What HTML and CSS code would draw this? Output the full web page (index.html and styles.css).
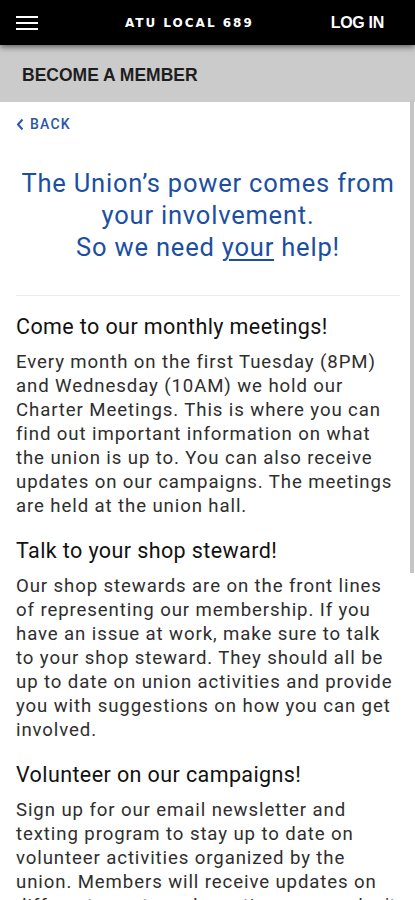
FILE: index.html
```html
<!DOCTYPE html>
<html>
<head>
<meta charset="utf-8">
<link rel="stylesheet" href="styles.css">
</head>
<body>
<header class="topbar">
  <div class="menu">
    <span></span><span></span><span></span>
  </div>
  <div class="brand">ATU LOCAL 689</div>
  <div class="login">LOG IN</div>
</header>
<div class="subbar">BECOME A MEMBER</div>
<main class="content">
  <a class="back">
    <svg width="8" height="13" viewBox="0 0 8 13"><path d="M6.5 1.5 L2 6.5 L6.5 11.5" fill="none" stroke="#2b56a6" stroke-width="2"/></svg>
    <span>BACK</span>
  </a>
  <h1 class="lead">The Union’s power comes from your involvement.<br>So we need <u>your</u> help!</h1>
  <hr class="divider">
  <h2 class="sec">Come to our monthly meetings!</h2>
  <p class="txt">Every month on the first Tuesday (8PM) and Wednesday (10AM) we hold our Charter Meetings. This is where you can find out important information on what the union is up to. You can also receive updates on our campaigns. The meetings are held at the union hall.</p>
  <h2 class="sec">Talk to your shop steward!</h2>
  <p class="txt">Our shop stewards are on the front lines of representing our membership. If you have an issue at work, make sure to talk to your shop steward. They should all be up to date on union activities and provide you with suggestions on how you can get involved.</p>
  <h2 class="sec">Volunteer on our campaigns!</h2>
  <p class="txt">Sign up for our email newsletter and texting program to stay up to date on volunteer activities organized by the union. Members will receive updates on different events and meetings so we don't miss a thing.</p>
</main>
<div class="scroll-thumb"></div>
</body>
</html>
```
FILE: styles.css
```css
html, body {
  margin: 0;
  padding: 0;
  height: 900px;
  overflow: hidden;
  background: #ffffff;
  font-family: Roboto, "Liberation Sans", sans-serif;
}
.topbar {
  position: relative;
  z-index: 2;
  height: 45px;
  background: #000;
  display: flex;
  align-items: center;
  padding: 0 16px;
  box-shadow: 0 2px 6px rgba(0,0,0,0.55);
  color: #fff;
}
.menu {
  width: 22px;
  display: flex;
  flex-direction: column;
  gap: 4px;
}
.menu span {
  display: block;
  height: 2px;
  background: #fff;
}
.brand {
  flex: 1;
  text-align: center;
  font-family: "DejaVu Sans", sans-serif;
  font-weight: bold;
  font-size: 12px;
  letter-spacing: 2px;
  padding-left: 10px;
}
.login {
  font-family: "Liberation Sans", sans-serif;
  font-weight: bold;
  font-size: 16px;
  letter-spacing: -0.3px;
  padding-right: 15px;
}
.subbar {
  height: 57px;
  background: #cbcbcb;
  display: flex;
  align-items: center;
  padding-left: 22px;
  padding-top: 3px;
  box-sizing: border-box;
  font-family: "Liberation Sans", sans-serif;
  font-weight: bold;
  font-size: 17.5px;
  color: #1e1e1e;
}
.content {
  padding: 0 15px 0 16px;
}
.back {
  display: flex;
  align-items: center;
  gap: 6px;
  margin-top: 14px;
  color: #2b56a6;
  font-size: 14px;
  font-weight: 500;
  letter-spacing: 1.2px;
  height: 16px;
}
.lead {
  margin: 35px 0 0;
  text-align: center;
  color: #1b4f9f;
  font-weight: 400;
  font-size: 25.5px;
  letter-spacing: 0.8px;
  line-height: 32px;
}
.lead u {
  text-underline-offset: 3px;
  text-decoration-thickness: 1.5px;
}
.divider {
  margin: 32px 0 0;
  border: 0;
  border-top: 1px solid #ececec;
}
.sec {
  margin: 18px 0 0;
  font-weight: 400;
  font-size: 21.5px;
  letter-spacing: 0.4px;
  line-height: 30px;
  color: #111;
}
.divider + .sec {
  margin-top: 16px;
}
.txt {
  margin: 8px 0 0;
  font-size: 18.6px;
  letter-spacing: 0.9px;
  line-height: 24px;
  color: #2e2e2e;
}
.scroll-thumb {
  position: absolute;
  left: 410px;
  top: 100px;
  width: 4px;
  height: 473px;
  background: #c5c5c5;
}
```
